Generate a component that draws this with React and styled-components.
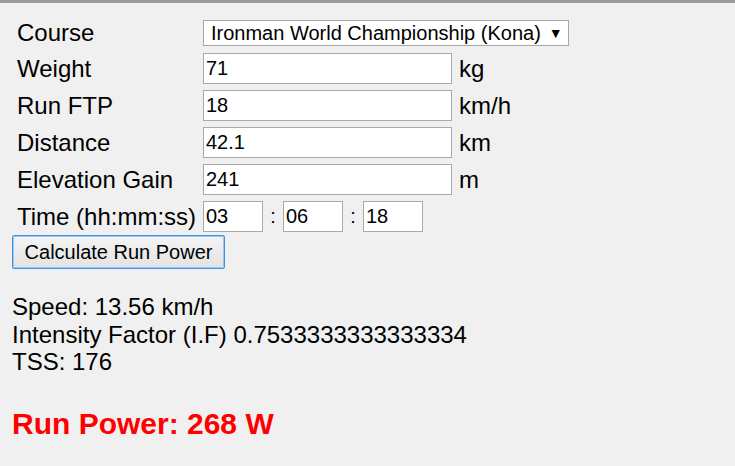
import styled, { createGlobalStyle } from "styled-components";

const GlobalStyle = createGlobalStyle`
  html, body {
    margin: 0;
    padding: 0;
    background: #f0f0f0;
  }
  body {
    font-family: "Liberation Sans", Arial, sans-serif;
    color: #000;
  }
`;

const fields = [
  { label: "Weight", value: "71", unit: "kg" },
  { label: "Run FTP", value: "18", unit: "km/h" },
  { label: "Distance", value: "42.1", unit: "km" },
  { label: "Elevation Gain", value: "241", unit: "m" },
];

const App = () => {
  return (
    <Page>
      <GlobalStyle />
      <Form>
        <Row $first>
          <Label>Course</Label>
          <Select>
            <span>Ironman World Championship (Kona)</span>
            <Arrow>▼</Arrow>
          </Select>
        </Row>
        {fields.map((f) => (
          <Row key={f.label}>
            <Label>{f.label}</Label>
            <Input defaultValue={f.value} />
            <Unit>{f.unit}</Unit>
          </Row>
        ))}
        <Row>
          <Label>Time (hh:mm:ss)</Label>
          <TimeGroup>
            <Input defaultValue="03" $small />
            <Colon>:</Colon>
            <Input defaultValue="06" $small />
            <Colon>:</Colon>
            <Input defaultValue="18" $small />
          </TimeGroup>
        </Row>
      </Form>
      <Button>Calculate Run Power</Button>
      <Results>
        <Line>Speed: 13.56 km/h</Line>
        <Line>Intensity Factor (I.F) 0.7533333333333334</Line>
        <Line>TSS: 176</Line>
      </Results>
      <Power>Run Power: 268 W</Power>
    </Page>
  );
};
export default App;

const Page = styled.div`
  border-top: 3px solid #9a9a9a;
  padding: 0 12px 0 12px;
  height: 463px;
  box-sizing: border-box;
`;

const Form = styled.div`
  display: flex;
  flex-direction: column;
  gap: 6px;
  padding-top: 17px;
`;

const Row = styled.div`
  display: grid;
  grid-template-columns: 186px max-content max-content;
  justify-content: start;
  align-items: center;
  height: ${(p) => (p.$first ? "26px" : "31px")};
  margin-bottom: ${(p) => (p.$first ? "1px" : "0")};
  padding-left: 5px;
`;

const Label = styled.div`
  font-size: 24px;
  line-height: 26px;
  white-space: nowrap;
`;

const Select = styled.div`
  display: flex;
  align-items: center;
  justify-content: space-between;
  width: 366px;
  height: 26px;
  box-sizing: border-box;
  border: 1px solid #a6a6a6;
  background: #fff;
  padding: 0 6px 0 7px;
  font-size: 20px;
  line-height: 24px;
  white-space: nowrap;
`;

const Arrow = styled.span`
  font-size: 14px;
  margin-left: 8px;
`;

const Input = styled.input`
  width: ${(p) => (p.$small ? "60px" : "249px")};
  height: 31px;
  box-sizing: border-box;
  border: 1px solid #a9a9a9;
  background: #fff;
  padding: 0 2px;
  margin: 0;
  font-family: "Liberation Sans", Arial, sans-serif;
  font-size: 20px;
  color: #000;
  outline: none;
`;

const Unit = styled.div`
  font-size: 24px;
  padding-left: 7px;
`;

const TimeGroup = styled.div`
  display: flex;
  align-items: center;
`;

const Colon = styled.span`
  font-size: 20px;
  width: 20px;
  text-align: center;
`;

const Button = styled.button`
  display: block;
  margin-top: 3px;
  width: 213px;
  height: 34px;
  box-sizing: border-box;
  border: 1px solid #3c94e6;
  box-shadow: inset 0 0 0 1px #9cc8f0;
  border-radius: 2px;
  background: linear-gradient(#f4f4f4, #e2e2e2);
  font-family: "Liberation Sans", Arial, sans-serif;
  font-size: 20px;
  color: #000;
  padding: 0;
`;

const Results = styled.div`
  margin-top: 24px;
  font-size: 24px;
  line-height: 27.6px;
`;

const Line = styled.div``;

const Power = styled.div`
  margin-top: 31px;
  font-size: 30px;
  font-weight: bold;
  color: #ff0000;
`;
